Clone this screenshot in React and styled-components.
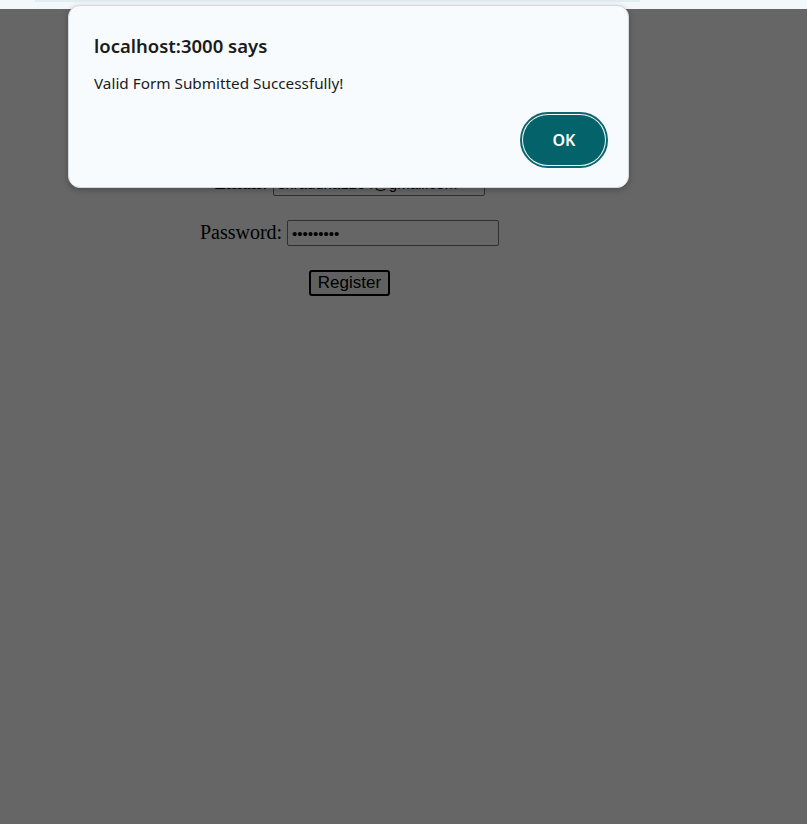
import React from "react";
import styled, { createGlobalStyle } from "styled-components";

const Global = createGlobalStyle`
  html, body { margin: 0; padding: 0; }
  body { background: #ffffff; font-family: "Liberation Serif", serif; }
`;

const Page = styled.div`
  position: relative;
  min-height: 824px;
  background: #ffffff;
  overflow: hidden;
`;

const TopStrip = styled.div`
  height: 9px;
  background: #f3f8fa;
  position: relative;
  z-index: 3;
  display: flex;
  padding: 0 167px 0 35px;
`;

const TopBand = styled.div`
  flex: 1;
  height: 2px;
  background: #e2edf2;
`;

const Form = styled.form`
  width: 683px;
  margin-left: 8px;
  padding-top: 111px;
  display: flex;
  flex-direction: column;
  align-items: center;
  gap: 24px;
`;

const Row = styled.div`
  display: flex;
  align-items: center;
  gap: 5px;
  height: 26px;
`;

const Label = styled.label`
  font-family: "Liberation Serif", serif;
  font-size: 20px;
  line-height: 22px;
  margin-top: -3px;
  color: #000;
`;

const Input = styled.input`
  box-sizing: border-box;
  width: 212px;
  height: 26px;
  border: 1px solid #767676;
  border-radius: 2px;
  background: #fff;
  font-family: "Liberation Sans", sans-serif;
  font-size: 15px;
  padding: 0 4px;
  color: #000;
`;

const Register = styled.button`
  box-sizing: border-box;
  height: 26px;
  width: 81px;
  border: 2px solid #000;
  border-radius: 3px;
  background: #efefef;
  font-family: "Liberation Sans", sans-serif;
  font-size: 17px;
  color: #000;
  padding: 0;
`;

const Overlay = styled.div`
  position: absolute;
  left: 0;
  right: 0;
  top: 9px;
  bottom: 0;
  background: rgba(0, 0, 0, 0.6);
  z-index: 1;
`;

const Dialog = styled.div`
  position: absolute;
  left: 68px;
  top: 5px;
  width: 561px;
  height: 183px;
  box-sizing: border-box;
  background: #f7fbfd;
  border: 1px solid #d3dadd;
  border-radius: 12px;
  box-shadow: 0 2px 6px rgba(0, 0, 0, 0.25);
  z-index: 4;
  padding: 28px 20px 19px 25px;
  display: flex;
  flex-direction: column;
  font-family: "Noto Sans", "Open Sans", sans-serif;
`;

const Title = styled.div`
  font-size: 18.5px;
  font-weight: 600;
  color: #1b1b1b;
  line-height: 24px;
`;

const Message = styled.div`
  margin-top: 15px;
  font-size: 15.3px;
  color: #1b1b1b;
  line-height: 20px;
`;

const Actions = styled.div`
  margin-top: auto;
  display: flex;
  justify-content: flex-end;
`;

const OkButton = styled.button`
  box-sizing: border-box;
  width: 84px;
  height: 52px;
  margin: 2px;
  border-radius: 26px;
  border: 1.5px solid #f7fbfd;
  background: #04636a;
  outline: 2.5px solid #0b666d;
  outline-offset: 0;
  color: #ffffff;
  font-family: "Noto Sans", "Open Sans", sans-serif;
  font-weight: 600;
  font-size: 16px;
  cursor: pointer;
`;

export default function App() {
  return (
    <Page>
      <Global />
      <TopStrip>
        <TopBand />
      </TopStrip>
      <Form onSubmit={(e) => e.preventDefault()}>
        <Row>
          <Label>Name:</Label>
          <Input type="text" defaultValue="Shraddha" />
        </Row>
        <Row>
          <Label>Email:</Label>
          <Input type="email" defaultValue="shraddha1234@gmail.com" />
        </Row>
        <Row>
          <Label>Password:</Label>
          <Input type="password" defaultValue="123456789" />
        </Row>
        <Register type="submit">Register</Register>
      </Form>
      <Overlay />
      <Dialog role="alertdialog">
        <Title>localhost:3000 says</Title>
        <Message>Valid Form Submitted Successfully!</Message>
        <Actions>
          <OkButton>OK</OkButton>
        </Actions>
      </Dialog>
    </Page>
  );
}
